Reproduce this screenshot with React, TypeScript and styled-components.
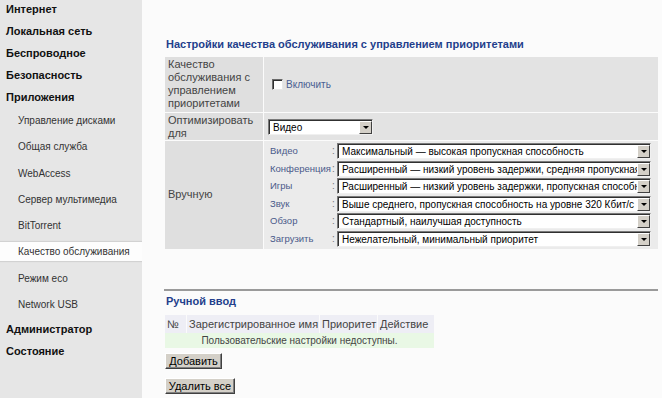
import React from "react";
import styled, { createGlobalStyle } from "styled-components";

const GlobalStyle = createGlobalStyle`
  html, body {
    margin: 0;
    padding: 0;
  }
  body {
    font-family: "Liberation Sans", Arial, sans-serif;
    background: #fbfbfb;
  }
`;

const Page = styled.div`
  display: flex;
  width: 662px;
  height: 398px;
  overflow: hidden;
`;

const Sidebar = styled.nav`
  width: 142px;
  flex-shrink: 0;
  background: #e6e6e6;
  display: flex;
  flex-direction: column;
`;

const TopItem = styled.div`
  height: 22px;
  line-height: 18px;
  padding-left: 6px;
  font-size: 11px;
  font-weight: bold;
  color: #111;
`;

const SubItem = styled.div`
  height: 26.3px;
  box-sizing: border-box;
  padding-top: 1px;
`;

const SubLabel = styled.div<{ $active?: boolean }>`
  height: 19px;
  line-height: 19px;
  padding-left: 18px;
  font-size: 10px;
  color: #333;
  background: ${(p) => (p.$active ? "#fdfdfd" : "transparent")};
  box-shadow: ${(p) =>
    p.$active ? "0 -1px 1px #d2d2d2, 0 1px 1px #d2d2d2" : "none"};
`;

const Main = styled.main`
  flex: 1;
  padding: 37px 4px 0 23px;
  background: #fbfbfb;
`;

const SectionTitle = styled.h2`
  margin: 0;
  padding-left: 1px;
  font-size: 11px;
  line-height: 14px;
  font-weight: bold;
  color: #233f8c;
`;

const SettingsGrid = styled.div`
  margin-top: 6px;
  display: grid;
  grid-template-columns: 98px 1fr;
  gap: 1px;
`;

const LabelCell = styled.div<{ $center?: boolean; $height?: number }>`
  box-sizing: border-box;
  background: #dfdfdf;
  padding: 1px 3px;
  font-size: 11px;
  line-height: 13px;
  color: #444;
  display: flex;
  align-items: ${(p) => (p.$center ? "center" : "flex-start")};
  height: ${(p) => (p.$height ? `${p.$height}px` : "auto")};
`;

const ValueCell = styled.div<{ $light?: boolean }>`
  background: ${(p) => (p.$light ? "#ebebeb" : "#e3e3e3")};
  padding: 0 4px;
  display: flex;
  align-items: center;
`;

const CheckRow = styled.label`
  display: flex;
  align-items: center;
  gap: 3px;
  padding-left: 4px;
  font-size: 10px;
  color: #4a5f92;
`;

const CheckBox = styled.span`
  width: 9px;
  height: 9px;
  background: #fff;
  border: 1px solid;
  border-color: #6a6a6a #e8e8e8 #e8e8e8 #6a6a6a;
  box-shadow: inset 1px 1px 0 #303030;
`;

const SelectBox = styled.div<{ $width: number }>`
  display: flex;
  width: ${(p) => p.$width}px;
  height: 16px;
  box-sizing: border-box;
  background: #fff;
  border: 1px solid;
  border-color: #7a7a7a #f0f0f0 #f0f0f0 #7a7a7a;
  box-shadow: inset 1px 1px 0 #303030;
`;

const SelectText = styled.span`
  flex: 1;
  min-width: 0;
  overflow: hidden;
  white-space: nowrap;
  padding: 0 0 0 4px;
  font-size: 10px;
  line-height: 14px;
  color: #000;
  margin-top: 1px;
`;

const ArrowButton = styled.span`
  width: 13px;
  flex-shrink: 0;
  margin: 1px 0 0 0;
  box-sizing: border-box;
  background: #d4d0c8;
  border: 1px solid;
  border-color: #fff #404040 #404040 #fff;
  display: flex;
  align-items: center;
  justify-content: center;

  &::after {
    content: "";
    border-left: 3px solid transparent;
    border-right: 3px solid transparent;
    border-top: 3px solid #000;
  }
`;

const ManualList = styled.div`
  display: grid;
  grid-template-columns: 62px 5px 314px;
  row-gap: 1.5px;
  padding: 2px 0 2px 2px;
  align-items: center;
`;

const ManualLabel = styled.span`
  font-size: 9.5px;
  color: #4a5a8a;
  line-height: 16px;
  white-space: nowrap;
`;

const Colon = styled.span`
  font-size: 10px;
  color: #777;
  line-height: 16px;
`;

const Divider = styled.hr`
  margin: 40px 0 0 -1px;
  border: none;
  border-top: 2px solid #9a9a9a;
  height: 0;
`;

const SubTitle = styled(SectionTitle)`
  margin-top: 3px;
`;

const EntriesGrid = styled.div`
  margin-top: 7px;
  display: grid;
  grid-template-columns: 21px 132px 57px 56px;
  column-gap: 1px;
  width: 268px;
`;

const HeadCell = styled.div`
  background: #eeeef5;
  height: 18px;
  line-height: 18px;
  padding-left: 2px;
  font-size: 11px;
  color: #444;
  white-space: nowrap;
`;

const EmptyRow = styled.div`
  grid-column: 1 / -1;
  background: #e9f8e5;
  height: 15px;
  line-height: 15px;
  text-align: center;
  font-size: 10px;
  color: #444;
`;

const ActionButton = styled.button<{ $width: number; $gap: number }>`
  display: block;
  margin-top: ${(p) => p.$gap}px;
  width: ${(p) => p.$width}px;
  height: 16px;
  padding: 0;
  font-family: "Liberation Sans", Arial, sans-serif;
  font-size: 11px;
  line-height: 12px;
  color: #000;
  background: #d4d0c8;
  border: 1px solid;
  border-color: #fff #404040 #404040 #fff;
  box-shadow: inset -1px -1px 0 #808080;
`;

const topBefore = ["Интернет", "Локальная сеть", "Беспроводное", "Безопасность", "Приложения"];
const subItems = [
  "Управление дисками",
  "Общая служба",
  "WebAccess",
  "Сервер мультимедиа",
  "BitTorrent",
  "Качество обслуживания",
  "Режим eco",
  "Network USB",
];
const topAfter = ["Администратор", "Состояние"];

const manual = [
  ["Видео", "Максимальный — высокая пропускная способность"],
  ["Конференция", "Расширенный — низкий уровень задержки, средняя пропускная способность"],
  ["Игры", "Расширенный — низкий уровень задержки, пропускная способность"],
  ["Звук", "Выше среднего, пропускная способность на уровне 320 Кбит/с"],
  ["Обзор", "Стандартный, наилучшая доступность"],
  ["Загрузить", "Нежелательный, минимальный приоритет"],
];

function Select({ value, width }: { value: string; width: number }) {
  return (
    <SelectBox $width={width}>
      <SelectText>{value}</SelectText>
      <ArrowButton />
    </SelectBox>
  );
}

export default function App() {
  return (
    <>
      <GlobalStyle />
      <Page>
        <Sidebar>
          {topBefore.map((t) => (
            <TopItem key={t}>{t}</TopItem>
          ))}
          {subItems.map((t) => (
            <SubItem key={t}>
              <SubLabel $active={t === "Качество обслуживания"}>{t}</SubLabel>
            </SubItem>
          ))}
          {topAfter.map((t) => (
            <TopItem key={t}>{t}</TopItem>
          ))}
        </Sidebar>
        <Main>
          <SectionTitle>
            Настройки качества обслуживания с управлением приоритетами
          </SectionTitle>
          <SettingsGrid>
            <LabelCell $height={55}>
              Качество обслуживания с управлением приоритетами
            </LabelCell>
            <ValueCell>
              <CheckRow>
                <CheckBox />
                Включить
              </CheckRow>
            </ValueCell>
            <LabelCell $height={27}>Оптимизировать для</LabelCell>
            <ValueCell>
              <Select value="Видео" width={105} />
            </ValueCell>
            <LabelCell $center>Вручную</LabelCell>
            <ValueCell $light>
              <ManualList>
                {manual.map(([label, value]) => (
                  <React.Fragment key={label}>
                    <ManualLabel>{label}</ManualLabel>
                    <Colon>:</Colon>
                    <Select value={value} width={314} />
                  </React.Fragment>
                ))}
              </ManualList>
            </ValueCell>
          </SettingsGrid>

          <Divider />
          <SubTitle>Ручной ввод</SubTitle>
          <EntriesGrid>
            <HeadCell>№</HeadCell>
            <HeadCell>Зарегистрированное имя</HeadCell>
            <HeadCell>Приоритет</HeadCell>
            <HeadCell>Действие</HeadCell>
            <EmptyRow>Пользовательские настройки недоступны.</EmptyRow>
          </EntriesGrid>
          <ActionButton $width={57} $gap={5}>Добавить</ActionButton>
          <ActionButton $width={70} $gap={9}>Удалить все</ActionButton>
        </Main>
      </Page>
    </>
  );
}
